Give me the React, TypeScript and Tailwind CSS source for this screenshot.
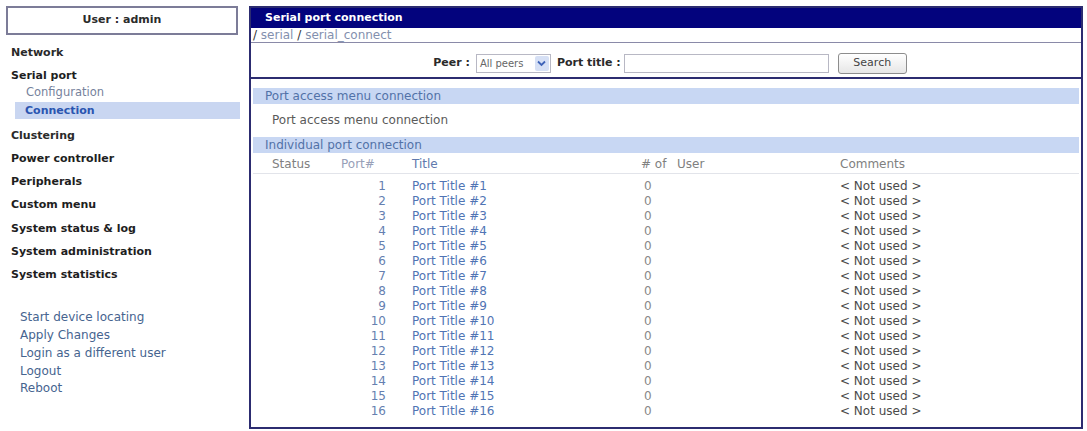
import React from 'react'

const MENU = ['Power controller', 'Peripherals', 'Custom menu', 'System status & log', 'System administration', 'System statistics']
const LINKS = ['Start device locating', 'Apply Changes', 'Login as a different user', 'Logout', 'Reboot']
const PORTS = Array.from({ length: 16 }, (_, i) => i + 1)

function Chevron() {
  return (
    <svg width="9" height="7" viewBox="0 0 9 7" aria-hidden="true">
      <path d="M1 1.5 L4.5 5 L8 1.5" fill="none" stroke="#3e63b8" strokeWidth="1.8" />
    </svg>
  )
}

function Sidebar() {
  return (
    <aside className="w-[234px] shrink-0 pt-[6px] text-[11px]">
      <div className="mr-[2px] flex h-[29px] items-center justify-center border-2 border-[#7c7c98] font-bold text-[#2b2b2b]">
        User : admin
      </div>
      <div className="mt-[6px] pl-[5px] font-bold leading-[24px] text-[#2a2a2a]">Network</div>
      <div className="mt-[2px] pl-[5px] font-bold leading-[18px] text-[#1e1e1e]">Serial port</div>
      <div className="pl-[20px] text-[11.5px] leading-[15px] text-[#76829c]">Configuration</div>
      <div className="ml-[9px] mt-[2px] bg-[#c9d6f1] pl-[10px] font-bold leading-[17px] text-[#2a55b0]">Connection</div>
      <div className="mt-[5px] pl-[5px] font-bold leading-[23px] text-[#2a2a2a]">Clustering</div>
      {MENU.map((m) => (
        <div key={m} className="pl-[5px] font-bold leading-[23.2px] text-[#1e1e1e]">
          {m}
        </div>
      ))}
      <div className="mt-[23px] pl-[14px] text-[12px]">
        {LINKS.map((l) => (
          <div key={l} className="leading-[17.8px] text-[#46648f]">
            {l}
          </div>
        ))}
      </div>
    </aside>
  )
}

function SectionHeader({ children }: { children: React.ReactNode }) {
  return <div className="h-[16px] bg-[#c8d7f3] pl-[12px] leading-[16px] text-[#5272a8]">{children}</div>
}

export default function App() {
  return (
    <div
      className="flex h-[431px] w-[1087px] overflow-hidden bg-white pl-[6px] text-[11px]"
      style={{ fontFamily: '"DejaVu Sans", Verdana, sans-serif' }}
    >
      <Sidebar />
      <main className="ml-[9px] mt-[6px] mb-[2px] flex w-[834px] flex-col border-2 border-[#2c2c70]">
        <div className="h-[20px] bg-[#03037d] pl-[14px] font-bold leading-[20px] text-white">Serial port connection</div>
        <div className="h-[15px] border-b border-[#8a8aa8] pl-[2px] text-[12px] leading-[14px] text-[#8390ae]">
          <span className="text-[#333]">/</span> serial <span className="text-[#333]">/</span> serial_connect
        </div>
        <div className="flex h-[36px] items-center justify-center border-b-2 border-[#2c2c70] pl-[8px] pt-[6px]">
          <span className="font-bold text-[#2a2a2a]">Peer :</span>
          <div className="ml-[6px] flex h-[19px] w-[75px] items-center border border-[#b8b8c4] bg-white">
            <span className="flex-1 pl-[3px] text-[10px] text-[#666]">All peers</span>
            <span className="mr-[1px] flex h-[15px] w-[14px] items-center justify-center rounded-[2px] bg-[#d6e0f5]">
              <Chevron />
            </span>
          </div>
          <span className="ml-[6px] font-bold text-[#2a2a2a]">Port title :</span>
          <div className="ml-[3px] h-[19px] w-[205px] border border-[#b8b8c4] bg-white" />
          <button className="ml-[9px] h-[21px] w-[69px] rounded-[3px] border border-[#8d8d8d] bg-gradient-to-b from-white to-[#e6e6e6] text-[11px] text-[#444]">
            Search
          </button>
        </div>
        <div className="flex-1 px-[2px] pt-[9px] text-[12px]">
          <SectionHeader>Port access menu connection</SectionHeader>
          <div className="pl-[19px] leading-[33px] text-[#5a5a5a]">Port access menu connection</div>
          <SectionHeader>Individual port connection</SectionHeader>
          <div className="flex h-[21px] items-center border-b border-[#e2e4ea] pl-[19px] pt-[1px] text-[#808080]">
            <span className="w-[69px]">Status</span>
            <span className="w-[71px] text-[#98a0b8]">Port#</span>
            <span className="w-[229px] text-[#6079ad]">Title</span>
            <span className="w-[36px] whitespace-nowrap">#&nbsp;of</span>
            <span className="w-[163px]">User</span>
            <span>Comments</span>
          </div>
          <div className="pt-[5px]">
            {PORTS.map((p) => (
              <div key={p} className="flex h-[15px] items-center pl-[19px] leading-[15px]">
                <span className="w-[69px]" />
                <span className="w-[45px] text-right text-[#6580b0]">{p}</span>
                <span className="ml-[26px] w-[232px] text-[#5074b4]">Port Title #{p}</span>
                <span className="w-[196px] text-[#888]">0</span>
                <span className="text-[#4a4a4a]">&lt; Not used &gt;</span>
              </div>
            ))}
          </div>
        </div>
      </main>
    </div>
  )
}
